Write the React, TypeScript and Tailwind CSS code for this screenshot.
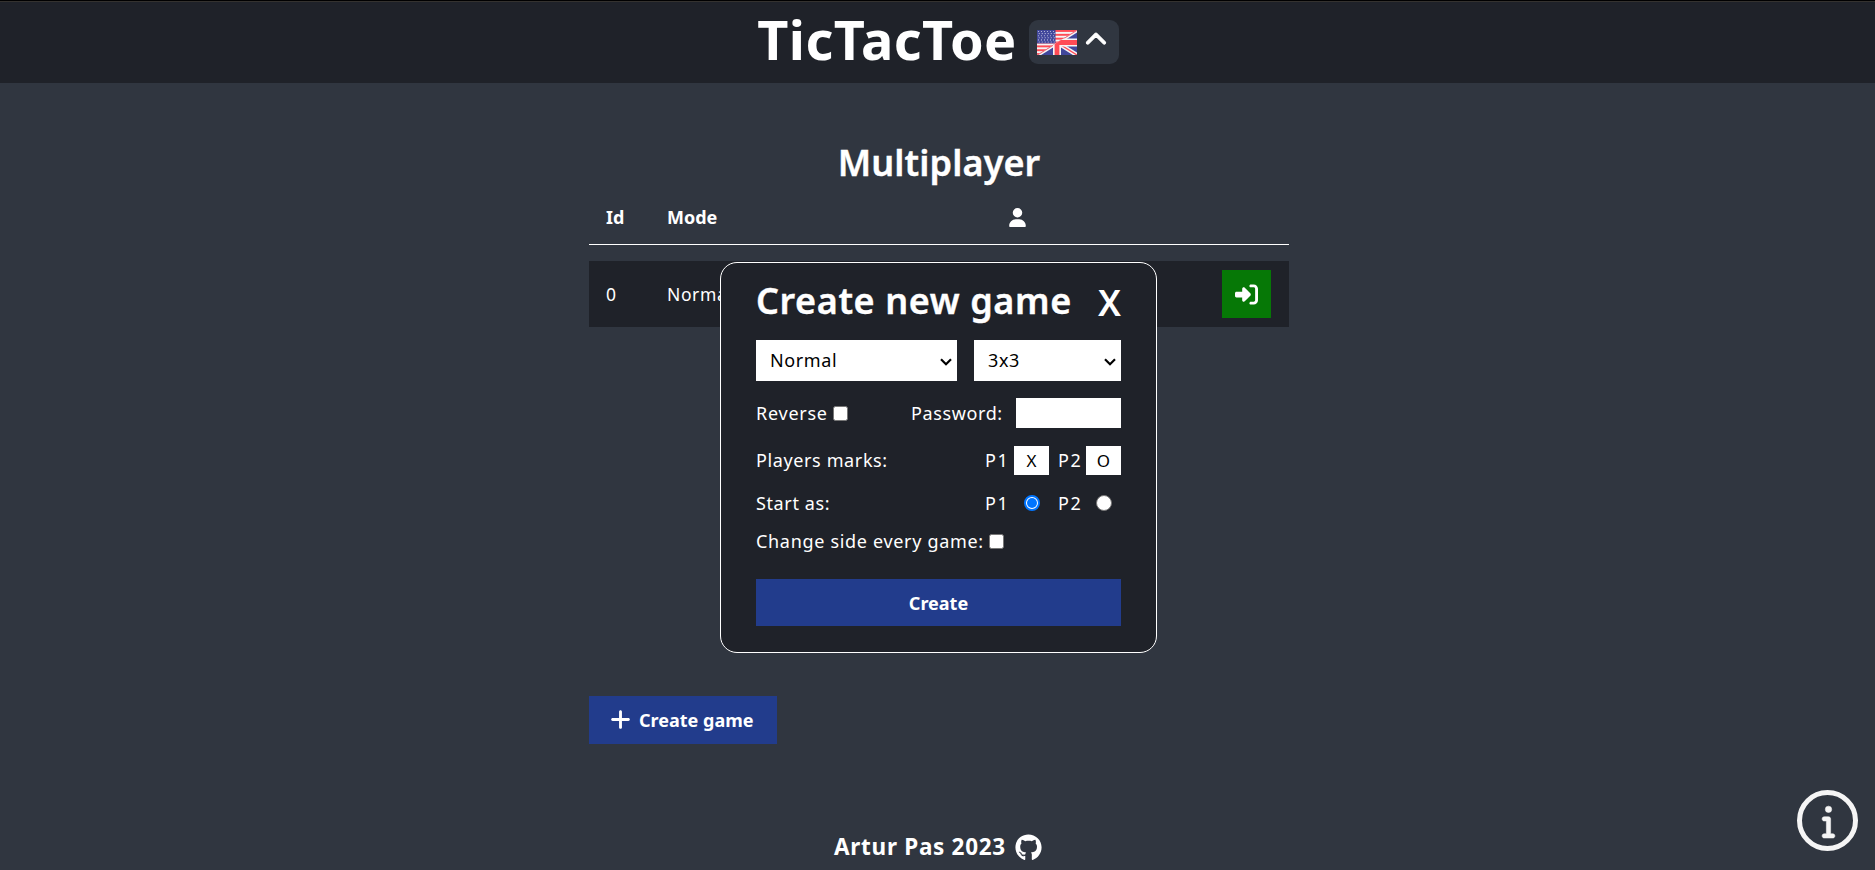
import { FaChevronUp, FaGithub, FaInfo, FaPlus, FaRightToBracket, FaUser } from "react-icons/fa6";

function Flag() {
  return (
    <svg width="40" height="25" viewBox="0 0 40 25" className="block">
      <rect width="40" height="25" fill="#f5f5f5" />
      {[0, 3.85, 7.7, 11.55, 15.4, 19.25, 23.1].map((y) => (
        <rect key={y} y={y} width="40" height="1.92" fill="#ff4b55" />
      ))}
      <rect width="18.5" height="13.4" fill="#41479b" />
      {[1.5, 3.6, 5.7, 7.8, 9.9, 12].map((y, r) =>
        [1.5, 4.5, 7.5, 10.5, 13.5, 16.5].map((x) => (
          <circle key={`${x}-${y}`} cx={x + (r % 2 ? 0.7 : -0.1)} cy={y} r="0.55" fill="#d5d6ea" />
        )),
      )}
      <clipPath id="uk">
        <path d="M40 0V25H0Z" />
      </clipPath>
      <g clipPath="url(#uk)">
        <rect width="40" height="25" fill="#41479b" />
        <path d="M0 25L40 0M20 12.5L40 25" stroke="#f5f5f5" strokeWidth="4.4" />
        <path d="M0 25L40 0M20 12.5L40 25" stroke="#ff4b55" strokeWidth="1.4" />
        <path d="M20 8V25M16 12.5H40" stroke="#f5f5f5" strokeWidth="8" />
        <path d="M20 10V25M18 12.5H40" stroke="#ff4b55" strokeWidth="4.8" />
      </g>
    </svg>
  );
}

function Select({ label, className }: { label: string; className: string }) {
  return (
    <button className={`flex h-[41px] items-center justify-between bg-white pl-[14px] pr-[5px] text-black ${className}`}>
      <span className="mb-0.5">{label}</span>
      <svg width="12" height="8" viewBox="0 0 12 8" fill="none" stroke="#000" strokeWidth="2.2" className="mt-0.5">
        <path d="M1 1.2L6 6.2L11 1.2" />
      </svg>
    </button>
  );
}

function Check() {
  return <span className="block size-[15px] rounded-[2.5px] border border-[#767676] bg-white" />;
}

function Modal() {
  return (
    <div className="absolute left-[720px] top-[262px] flex h-[391px] w-[437px] flex-col rounded-[17px] border border-white bg-[#1f2229] px-[35px] text-[18px] leading-6 tracking-[0.62px]">
      <div className="mt-[14px] flex h-12 items-center justify-between">
        <h2 className="text-[36px] font-semibold tracking-[0.6px] [-webkit-text-stroke:0.4px_white]">Create new game</h2>
        <button className="mt-1 text-[36px] font-semibold tracking-normal">X</button>
      </div>
      <div className="mt-[15px] flex justify-between">
        <Select label="Normal" className="w-[201px]" />
        <Select label="3x3" className="w-[147px]" />
      </div>
      <div className="mt-[17px] flex h-[30px] items-center">
        <span className="w-[77px] tracking-[0.75px]">Reverse</span>
        <Check />
        <span className="ml-auto w-[105px]">Password:</span>
        <span className="h-[30px] w-[105px] bg-white" />
      </div>
      <div className="mt-[18px] flex h-[29px] items-center">
        <span className="mb-0.5 mr-auto">Players marks:</span>
        <span className="mb-0.5 w-[29px] tracking-[1.6px]">P1</span>
        <span className="flex h-[29px] w-[35px] items-center justify-center bg-white text-[17px] text-black tracking-normal">X</span>
        <span className="mb-0.5 ml-[9px] w-[28px] tracking-[1.6px]">P2</span>
        <span className="flex h-[29px] w-[35px] items-center justify-center bg-white text-[17px] text-black tracking-normal">O</span>
      </div>
      <div className="mt-4 flex h-6 items-center">
        <span className="mr-auto">Start as:</span>
        <span className="w-[29px] tracking-[1.6px]">P1</span>
        <span className="flex w-[35px] justify-center">
          <span className="flex size-4 items-center justify-center rounded-full border-2 border-[#0075ff] bg-white">
            <span className="size-2.5 rounded-full bg-[#0075ff]" />
          </span>
        </span>
        <span className="ml-[9px] w-[28px] tracking-[1.6px]">P2</span>
        <span className="flex w-[35px] justify-center">
          <span className="size-4 rounded-full border border-[#767676] bg-white" />
        </span>
      </div>
      <div className="mt-3.5 flex h-6 items-center">
        <span className="w-[233px] whitespace-nowrap tracking-[0.68px]">Change side every game:</span>
        <Check />
      </div>
      <button className="mt-[26px] flex h-[47px] items-center justify-center bg-[#223c8c] text-[18px] font-bold tracking-normal">
        Create
      </button>
    </div>
  );
}

export default function App() {
  return (
    <div className="relative flex h-[870px] w-full flex-col overflow-hidden bg-[#303640] font-['Noto_Sans',sans-serif] text-white">
      <header className="flex h-[83px] items-start justify-center border-t border-black bg-[#1f2229] pl-px shadow-[inset_0_1px_0_#34322f]">
        <h1 className="text-[54px] font-bold leading-[77px] tracking-[0.45px]">TicTacToe</h1>
        <button className="ml-3 mt-[19px] flex h-11 w-[90px] items-center rounded-[9px] bg-[#303640] pl-2">
          <Flag />
          <FaChevronUp className="-mt-1 ml-2 size-[22px]" stroke="currentColor" strokeWidth="24" />
        </button>
      </header>

      <main className="ml-[589px] flex w-[700px] flex-col">
        <h2 className="mt-[56px] text-center text-[36px] font-semibold leading-[48px] tracking-[0.1px] [-webkit-text-stroke:0.4px_white]">
          Multiplayer
        </h2>
        <div className="flex h-[58px] items-center border-b border-white pl-[17px] pt-1 text-[18px] font-bold">
          <span className="w-[61px]">Id</span>
          <span className="w-[342px]">Mode</span>
          <FaUser className="h-[19px] w-[17px]" />
        </div>
        <div className="mt-4 flex h-[66px] items-center bg-[#1f2229] pl-[17px] pr-[18px] text-[17.5px] tracking-[0.6px]">
          <span className="w-[61px]">0</span>
          <span>Normal</span>
          <button className="ml-auto flex h-12 w-[49px] items-center justify-center bg-[#067806]">
            <FaRightToBracket className="size-[23px]" />
          </button>
        </div>
        <button className="mt-[369px] flex h-12 w-[188px] items-center bg-[#223c8c] pl-[21px] text-[18px] font-bold">
          <FaPlus className="-mt-0.5 mr-2 h-[23px] w-[21px]" />
          Create game
        </button>
      </main>

      <footer className="mt-[87px] flex h-8 items-center justify-center gap-[9px] pl-px">
        <span className="text-[22.5px] font-bold tracking-[0.7px]">Artur Pas 2023</span>
        <FaGithub className="size-[27px]" />
      </footer>

      <Modal />

      <button className="absolute left-[1797px] top-[790px] flex size-[61px] items-center justify-center rounded-full border-[5px] border-[#f5f5f5] pl-px text-[#f5f5f5]">
        <FaInfo className="h-[34px] w-[13px] overflow-visible" stroke="currentColor" strokeWidth="8" />
      </button>
    </div>
  );
}
